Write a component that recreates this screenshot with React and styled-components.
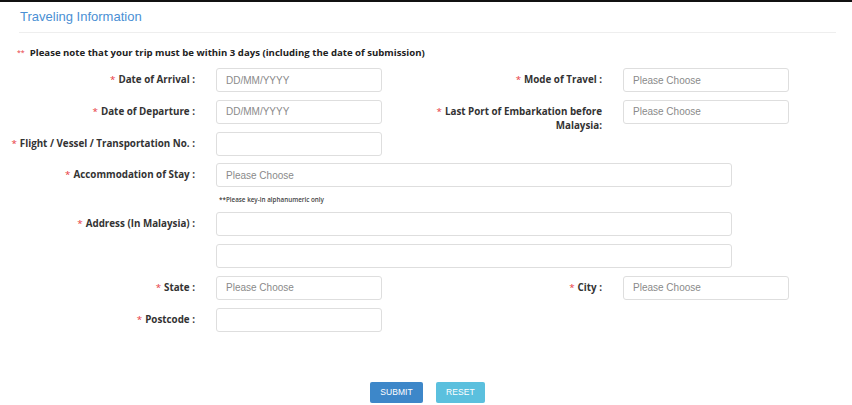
import styled, {createGlobalStyle} from 'styled-components'

const GlobalStyle = createGlobalStyle`
  html, body {
    margin: 0;
    background: #fff;
  }
  body {
    font-family: "Liberation Sans", Arial, sans-serif;
  }
`

const Page = styled.div`
  width: 852px;
  height: 405px;
  box-sizing: border-box;
  border-top: 2px solid #111;
  overflow: hidden;
`

const Header = styled.div`
  margin: 0 16px 0 19px;
  padding: 7px 1px 8px;
  border-bottom: 1px solid #eeeeee;
`

const Title = styled.h3`
  margin: 0;
  font-size: 13px;
  line-height: 15px;
  font-weight: normal;
  color: #4a8fd4;
`

const Note = styled.p`
  margin: 14px 0 0 17px;
  font-family: "Open Sans", "Noto Sans", sans-serif;
  font-size: 9.6px;
  line-height: 12px;
  font-weight: bold;
  color: #222;
`

const Star = styled.span`
  color: #e8383d;
  font-weight: normal;
  font-size: ${p => (p.$size ? `${p.$size}px` : 'inherit')};
  vertical-align: ${p => (p.$size ? '1px' : 'baseline')};
  margin-right: ${p => p.$gap || 3}px;
`

const Form = styled.div`
  display: grid;
  grid-template-columns: 195px 166px 199px 166px;
  column-gap: 21px;
  row-gap: 7.75px;
  margin-top: 9px;
`

const Label = styled.label`
  grid-column: ${p => (p.$second ? 3 : 1)};
  justify-self: end;
  max-width: ${p => (p.$wrap ? '168px' : 'none')};
  height: 24px;
  padding-top: 5px;
  box-sizing: border-box;
  text-align: right;
  font-family: "Open Sans", "Noto Sans", sans-serif;
  font-size: 9.8px;
  line-height: 14px;
  font-weight: bold;
  color: #333;
  white-space: ${p => (p.$wrap ? 'normal' : 'nowrap')};
  overflow: visible;
`

const Input = styled.input`
  grid-column: ${p => (p.$wide ? '2 / span 3' : 'auto')};
  width: ${p => (p.$wide ? '516px' : '166px')};
  height: 24px;
  box-sizing: border-box;
  padding: 0 9px;
  border: 1px solid #dedede;
  border-radius: 3px;
  background: #fff;
  font-family: "Liberation Sans", Arial, sans-serif;
  font-size: 10px;
  color: #555;
  outline: none;
  &::placeholder {
    color: #8a8a8a;
  }
`

const Hint = styled.div`
  grid-column: 2 / span 3;
  height: 9.5px;
  padding-left: 3px;
  font-family: "Open Sans", "Noto Sans", sans-serif;
  font-size: 6.3px;
  line-height: 9.5px;
  font-weight: 600;
  color: #444;
`

const Actions = styled.div`
  display: flex;
  justify-content: center;
  gap: 13px;
  margin-top: 50px;
  padding-left: 3px;
`

const Button = styled.button`
  height: 21px;
  width: ${p => (p.$variant === 'info' ? 49 : 53)}px;
  padding: 0;
  border: none;
  border-radius: 2px;
  background: ${p => (p.$variant === 'info' ? '#5bc0de' : '#3d87c9')};
  color: #fff;
  font-family: "Liberation Sans", Arial, sans-serif;
  font-size: 8.5px;
  letter-spacing: 0.1px;
  text-transform: uppercase;
  cursor: pointer;
`

const Field = ({label, second, wrap}) => (
  <Label $second={second} $wrap={wrap}>
    <Star>*</Star>
    {label}
  </Label>
)

export default function App() {
  return (
    <Page>
      <GlobalStyle />
      <Header>
        <Title>Traveling Information</Title>
      </Header>
      <Note>
        <Star $gap={5} $size={7}>**</Star>
        Please note that your trip must be within 3 days (including the date of submission)
      </Note>
      <Form>
        <Field label="Date of Arrival :" />
        <Input placeholder="DD/MM/YYYY" readOnly />
        <Field label="Mode of Travel :" second />
        <Input placeholder="Please Choose" readOnly />

        <Field label="Date of Departure :" />
        <Input placeholder="DD/MM/YYYY" readOnly />
        <Field label="Last Port of Embarkation before Malaysia:" second wrap />
        <Input placeholder="Please Choose" readOnly />

        <Field label="Flight / Vessel / Transportation No. :" />
        <Input readOnly />

        <Field label="Accommodation of Stay :" />
        <Input $wide placeholder="Please Choose" readOnly />

        <Hint>**Please key-in alphanumeric only</Hint>

        <Field label="Address (In Malaysia) :" />
        <Input $wide readOnly />
        <Input $wide readOnly />

        <Field label="State :" />
        <Input placeholder="Please Choose" readOnly />
        <Field label="City :" second />
        <Input placeholder="Please Choose" readOnly />

        <Field label="Postcode :" />
        <Input readOnly />
      </Form>
      <Actions>
        <Button>Submit</Button>
        <Button $variant="info">Reset</Button>
      </Actions>
    </Page>
  )
}
